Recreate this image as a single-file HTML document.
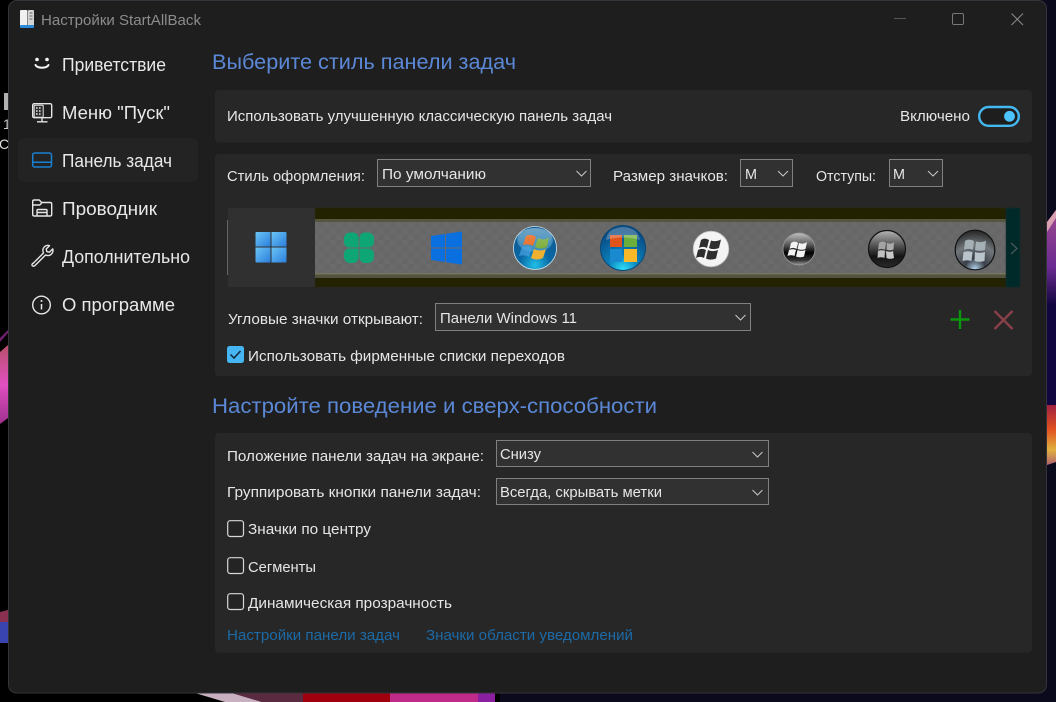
<!DOCTYPE html>
<html><head><meta charset="utf-8"><style>
html,body{margin:0;padding:0;background:#000;width:1056px;height:702px;overflow:hidden}
svg{display:block;filter:blur(.35px)}
text{font-family:"Liberation Sans",sans-serif;white-space:pre}
.b{font-size:15px;fill:#e6e6e6}
.n{font-size:18px;fill:#e8e8e8}
.h{font-size:21.5px;fill:#5b88d6}
.l{font-size:15px;fill:#1c6aa6}
</style></head><body>
<svg width="1056" height="702" viewBox="0 0 1056 702" xmlns="http://www.w3.org/2000/svg">
<defs>
<pattern id="ck" width="12" height="12" patternUnits="userSpaceOnUse"><rect width="12" height="12" fill="#6a6a6a"/><rect width="6" height="6" fill="#676767"/><rect x="6" y="6" width="6" height="6" fill="#676767"/></pattern>
<linearGradient id="w11" x1="0" y1="0" x2="1" y2="1"><stop offset="0" stop-color="#6cc4f5"/><stop offset="1" stop-color="#2a7fdc"/></linearGradient>
<radialGradient id="blue" cx=".5" cy=".9" r=".8"><stop offset="0" stop-color="#1fc0e8"/><stop offset=".45" stop-color="#0a68a4"/><stop offset="1" stop-color="#0f5a94"/></radialGradient>
<radialGradient id="blue2" cx=".5" cy=".98" r=".85"><stop offset="0" stop-color="#2fe0fa"/><stop offset=".4" stop-color="#0a80ba"/><stop offset="1" stop-color="#0a4c84"/></radialGradient>
<linearGradient id="sh" x1="0" y1="0" x2="0" y2="1"><stop offset="0" stop-color="#fff" stop-opacity=".55"/><stop offset="1" stop-color="#fff" stop-opacity=".05"/></linearGradient>
<linearGradient id="dk1" x1="0" y1="0" x2="0" y2="1"><stop offset="0" stop-color="#c0c0c0"/><stop offset=".38" stop-color="#555"/><stop offset=".62" stop-color="#000"/><stop offset=".85" stop-color="#333"/><stop offset="1" stop-color="#999"/></linearGradient>
<linearGradient id="dk2" x1="0" y1="0" x2="0" y2="1"><stop offset="0" stop-color="#b4b4b4"/><stop offset=".45" stop-color="#4a4a4a"/><stop offset=".7" stop-color="#141414"/><stop offset="1" stop-color="#2a2a2a"/></linearGradient>
<radialGradient id="dk3" cx=".5" cy=".98" r=".95"><stop offset="0" stop-color="#b4d4ec"/><stop offset=".28" stop-color="#3a4048"/><stop offset=".65" stop-color="#70767a"/><stop offset="1" stop-color="#2a2a2a"/></radialGradient>
<linearGradient id="lg" x1="0" y1="0" x2="0" y2="1"><stop offset="0" stop-color="#b8506a"/><stop offset=".5" stop-color="#e050c0"/><stop offset="1" stop-color="#a03090"/></linearGradient>
<linearGradient id="rg" x1="0" y1="0" x2="0" y2="1"><stop offset="0" stop-color="#a02040"/><stop offset=".4" stop-color="#e05020"/><stop offset=".75" stop-color="#e0b040"/><stop offset="1" stop-color="#b06070"/></linearGradient>
<linearGradient id="rp" x1="0" y1="0" x2="0" y2="1"><stop offset="0" stop-color="#a04a90"/><stop offset=".6" stop-color="#6a2a90"/><stop offset="1" stop-color="#120640"/></linearGradient>
<filter id="bl"><feGaussianBlur stdDeviation=".7"/></filter>
</defs>

<!-- desktop -->
<rect width="1056" height="702" fill="#000"/>
<rect x="500" y="0" width="556" height="702" fill="#0b0a1c"/>
<polygon points="1047,222 1056,210 1056,305 1047,305" fill="url(#rp)"/>
<polygon points="1047,222 1056,210 1056,218 1047,232" fill="#d8a0b0"/>
<rect x="1047" y="305" width="9" height="100" fill="#120640"/>
<polygon points="1047,405 1056,405 1056,462 1047,465" fill="url(#rg)"/>
<polygon points="0,352 8,345 8,418 0,424" fill="url(#lg)"/>
<polygon points="0,338 8,330 8,333 0,342" fill="#702070"/>
<polygon points="0,622 8,622 8,643 0,643" fill="#3a44b0"/>
<polygon points="0,612 8,610 8,622 0,622" fill="#8a3050"/>
<rect x="4" y="93" width="4" height="17" fill="#b0b0b0"/>
<text x="3" y="129" style="font-size:14px;fill:#ccc">1</text>
<text x="-1" y="149" style="font-size:14px;fill:#ddd">C</text>
<polygon points="195,693 232,693 262,702 225,702" fill="#c8b0c0"/>
<polygon points="232,693 303,693 303,702 262,702" fill="#5a2a40"/>
<rect x="303" y="693" width="87" height="9" fill="#a0000e"/>
<rect x="390" y="693" width="88" height="9" fill="#c02a88"/>
<rect x="478" y="693" width="17" height="9" fill="#8a20a0"/>

<!-- window -->
<rect x="8.5" y="0.5" width="1038" height="692.5" rx="8" fill="#1e1e1e" stroke="#34343a"/>

<!-- title -->
<rect x="20" y="10" width="7.5" height="16" rx="1" fill="#f0f0f0"/>
<rect x="28" y="10" width="6" height="16" rx="1" fill="#d4d4d4"/>
<path d="M29.5 13h3M29.5 16h3M29.5 19h3" stroke="#666" stroke-width="1"/>
<rect x="20" y="25" width="14" height="3" rx="1" fill="#2a8ad8"/>
<text x="41" y="25" textLength="160" lengthAdjust="spacingAndGlyphs" style="font-size:14.5px;fill:#8c8c8c">Настройки StartAllBack</text>
<path d="M894 18.5h12" stroke="#555" stroke-width="1"/>
<rect x="952.5" y="13.5" width="11" height="11" rx="1.5" fill="none" stroke="#777"/>
<path d="M1011.5 13.5l11.5 11.5M1023 13.5l-11.5 11.5" stroke="#888" stroke-width="1.1" fill="none"/>

<!-- nav -->
<rect x="18" y="138" width="180" height="44" rx="6" fill="#232323"/>
<text class="n" x="62" y="71" textLength="104" lengthAdjust="spacingAndGlyphs">Приветствие</text>
<text class="n" x="62" y="119" textLength="108" lengthAdjust="spacingAndGlyphs">Меню "Пуск"</text>
<text class="n" x="62" y="167" textLength="110" lengthAdjust="spacingAndGlyphs">Панель задач</text>
<text class="n" x="62" y="215" textLength="95" lengthAdjust="spacingAndGlyphs">Проводник</text>
<text class="n" x="62" y="263" textLength="128" lengthAdjust="spacingAndGlyphs">Дополнительно</text>
<text class="n" x="62" y="311" textLength="113" lengthAdjust="spacingAndGlyphs">О программе</text>

<!-- smile -->
<circle cx="37" cy="59.5" r="1.8" fill="#f6f6f6"/><circle cx="47" cy="59.5" r="1.8" fill="#f6f6f6"/>
<path d="M35.5 65c2 3.6 11 3.6 13 0" fill="none" stroke="#f6f6f6" stroke-width="2" stroke-linecap="round"/>
<!-- monitor -->
<g fill="none" stroke="#e4e4e4" stroke-width="1.4">
<rect x="32.7" y="103.7" width="19" height="14" rx="1.5"/>
<rect x="34.2" y="105.2" width="9" height="12" rx=".5" fill="#2c2c2c" stroke-width="1"/>
<path d="M42 118v3.5M37 121.8h10.5"/>
<path d="M36 108h1.6M39 108h1.6M36 111h1.6M39 111h1.6M36 114h1.6M39 114h1.6" stroke-width="1.4"/>
</g>
<!-- taskbar -->
<rect x="32.7" y="153" width="18.8" height="14" rx="2" fill="none" stroke="#1a80d0" stroke-width="1.5"/>
<path d="M33 162.2h18" stroke="#1a80d0" stroke-width="1.5"/>
<!-- folder -->
<g fill="none" stroke="#e6e6e6" stroke-width="1.4">
<path d="M32.7 214v-12.5q0-1.5 1.5-1.5h5l2.5 2.5h8.5q1.5 0 1.5 1.5v10.5q0 1.5-1.5 1.5h-16q-1.5 0-1.5-1.5z"/>
<path d="M32.7 205h7l2-2"/>
<path d="M37 215.5v-5q0-1 1-1h8q1 0 1 1v5M37 212.5h10"/>
</g>
<!-- wrench -->
<path d="M33.5 262.5l10.5-10.5c-1.5-3.500 0-6 2-7 1.300-.7 3-.8 4-.3l-3.300 3.300.6 2.600 2.600.6 3.300-3.300c.5 1.200.3 3-.5 4.200-1.300 2-3.700 3-6.800 2l-10.500 10.500c-1.300 1.200-3 .3-2.900-.6-.2-.5.100-1 .5-1.500z" fill="none" stroke="#e6e6e6" stroke-width="1.4" stroke-linejoin="round" transform="translate(-.5 1)"/>
<!-- info -->
<circle cx="41.500" cy="305" r="8.800" fill="none" stroke="#e6e6e6" stroke-width="1.4"/>
<circle cx="41.500" cy="301" r="1" fill="#e6e6e6"/>
<path d="M41.500 304v5.500" stroke="#e6e6e6" stroke-width="1.500"/>

<!-- headings -->
<text class="h" x="212" y="69" textLength="304" lengthAdjust="spacingAndGlyphs">Выберите стиль панели задач</text>
<text class="h" x="212" y="413" textLength="445" lengthAdjust="spacingAndGlyphs">Настройте поведение и сверх-способности</text>

<!-- cards -->
<rect x="215" y="90" width="817" height="52.500" rx="4" fill="#272727"/>
<rect x="215" y="154" width="817" height="222" rx="4" fill="#272727"/>
<rect x="215" y="433" width="817" height="219.500" rx="4" fill="#272727"/>

<!-- card 1 -->
<text class="b" x="227" y="121" textLength="385" lengthAdjust="spacingAndGlyphs">Использовать улучшенную классическую панель задач</text>
<text class="b" x="900" y="121" textLength="70" lengthAdjust="spacingAndGlyphs">Включено</text>
<rect x="979.200" y="107" width="39.600" height="18.800" rx="9.400" fill="#1e1e1e" stroke="#44b8f0" stroke-width="2.400"/>
<circle cx="1009.500" cy="116.300" r="5.400" fill="#4cc2ff"/>

<!-- card 2 row 1 -->
<text class="b" x="227" y="181" textLength="138" lengthAdjust="spacingAndGlyphs">Стиль оформления:</text>
<rect x="377.500" y="159.500" width="213" height="27" fill="#313131" stroke="#808080"/>
<text class="b" x="382" y="179" textLength="104" lengthAdjust="spacingAndGlyphs">По умолчанию</text>
<path d="M576.500 171l5 5 5-5" fill="none" stroke="#c8c8c8" stroke-width="1"/>
<text class="b" x="613" y="181" textLength="115" lengthAdjust="spacingAndGlyphs">Размер значков:</text>
<rect x="740.500" y="159.500" width="52" height="27" fill="#313131" stroke="#808080"/>
<text class="b" x="745" y="179" textLength="12" lengthAdjust="spacingAndGlyphs">M</text>
<path d="M778 171l5 5 5-5" fill="none" stroke="#c8c8c8" stroke-width="1"/>
<text class="b" x="816" y="181" textLength="60" lengthAdjust="spacingAndGlyphs">Отступы:</text>
<rect x="889.500" y="159.500" width="53" height="27" fill="#313131" stroke="#808080"/>
<text class="b" x="893" y="179" textLength="12" lengthAdjust="spacingAndGlyphs">M</text>
<path d="M928 171l5 5 5-5" fill="none" stroke="#c8c8c8" stroke-width="1"/>

<!-- strip -->
<rect x="315" y="208" width="691" height="79" fill="#232300" filter="url(#bl)"/>
<rect x="315" y="219" width="691" height="59" fill="url(#ck)"/>
<rect x="315" y="219" width="691" height="3" fill="#55563e"/>
<rect x="315" y="273" width="691" height="1.500" fill="#76765e"/>
<rect x="315" y="274.500" width="691" height="3.500" fill="#52533c"/>
<rect x="1006" y="208" width="14" height="79" fill="#052c2a" filter="url(#bl)"/>
<path d="M1011 243l6 5.500-6 5.500" fill="none" stroke="#4a5856" stroke-width="1.200"/>
<rect x="228" y="208" width="87" height="79" rx="2" fill="#303030"/>
<rect x="227" y="220" width="1" height="55" fill="#666"/>

<!-- win11 -->
<g>
<path d="M256.500 232h14v14.500h-15v-13.500q0-1 1-1z" fill="url(#w11)"/>
<path d="M271.500 232h14q1 0 1 1v13.500h-15z" fill="url(#w11)"/>
<path d="M255.500 247.500h15v15h-14q-1 0-1-1z" fill="url(#w11)"/>
<path d="M271.500 247.500h15v14q0 1-1 1h-14z" fill="url(#w11)"/>
</g>
<!-- clover -->
<g fill="#0fa676">
<path d="M358.500 247.500h-9a5.500 5.500 0 0 1-5.500-5.500v-3.500a6 6 0 0 1 6-6h3a5.500 5.500 0 0 1 5.500 5.500z"/>
<path d="M359.500 247.500h9a5.500 5.500 0 0 0 5.500-5.500v-3.500a6 6 0 0 0-6-6h-3a5.500 5.500 0 0 0-5.500 5.500z"/>
<path d="M358.500 248.500h-9a5.500 5.500 0 0 0-5.500 5.500v3a6 6 0 0 0 6 6h3a5.500 5.500 0 0 0 5.500-5.500z"/>
<path d="M359.500 248.500h9a5.500 5.500 0 0 1 5.500 5.500v3a6 6 0 0 1-6 6h-3a5.500 5.500 0 0 1-5.500-5.500z"/>
</g>
<!-- win10 -->
<g fill="#0a70e0">
<path d="M431 236l14-2v13.500h-14z"/><path d="M446 233.800l16-2.300v16h-16z"/>
<path d="M431 248.500h14v13.500l-14-2z"/><path d="M446 248.500h16v16l-16-2.300z"/>
</g>
<!-- orb 1 -->
<circle cx="535" cy="248" r="21.500" fill="url(#blue)" stroke="#cfe4ee" stroke-width=".8"/>
<ellipse cx="535" cy="240" rx="18" ry="12" fill="#7cc0e0" opacity=".45"/>
<path d="M526 236c4-2 7-1 10 1l-3 9c-3-2-7-2-10-1z" fill="#e86a20"/>
<path d="M538 238c4 2 8 2 11-1l-2 10c-4 2-8 2-12 0z" fill="#7cae3c"/>
<path d="M522 247c4-1 7-1 10 1l-3 9c-3-2-7-2-10-1z" fill="#4aa4e4" opacity=".7"/>
<path d="M534 249c4 2 8 2 12 0l-3 9c-4 2-8 2-12 0z" fill="#f0b030"/>
<ellipse cx="535" cy="238" rx="17" ry="10" fill="url(#sh)" opacity=".45"/>
<!-- orb 2 -->
<circle cx="623" cy="248" r="22.500" fill="url(#blue2)" stroke="#0a4878" stroke-width="1"/>
<rect x="610" y="235" width="12" height="12" fill="#e0541c"/>
<rect x="624" y="235" width="13" height="12" fill="#6cae3c"/>
<rect x="610" y="249" width="12" height="13" fill="#1a8ad0"/>
<rect x="624" y="249" width="13" height="13" fill="#f8b828"/>
<path d="M606 240q1-12 17-13 15 1 17 13-17-5-34 0z" fill="#fff" opacity=".25"/>
<!-- orb white -->
<circle cx="711" cy="249" r="17.800" fill="#f4f4f4" stroke="#bbb" stroke-width=".8"/>
<path d="M701 240c3-2 5-1.500 8 0l-2 8c-3-1.500-5-1.500-8 0z" fill="#2e2e2e"/>
<path d="M711 240.500c3 1 6 1 10-1l-2 8.500c-4 1.500-7 1.500-10 0z" fill="#2e2e2e"/>
<path d="M698 250c3-1.500 5-1.500 8 0l-2 8c-3-1.500-5-1.500-8 0z" fill="#2e2e2e"/>
<path d="M708 250c3 1.500 6 1.500 10 0l-2 8.500c-4 1.500-7 1.500-10 0z" fill="#2e2e2e"/>
<!-- orb dark 1 -->
<circle cx="799" cy="249" r="16" fill="url(#dk1)" stroke="#9a9a9a" stroke-width=".8"/>
<path d="M791 243c3-2 5-1.500 7 0l-1.500 6c-2-1.500-5-1.500-7 0z" fill="#f2f2f2"/>
<path d="M799 243c3 1 5 1 8-1l-1.500 7c-3 1-5 1-8 0z" fill="#f2f2f2"/>
<path d="M789 250c2-1 5-1 7 0l-1.500 6c-2-1-5-1-7 0z" fill="#f2f2f2"/>
<path d="M797.500 250c3 1 5 1 8 0l-1.500 6.500c-3 1-5 1-8 0z" fill="#f2f2f2"/>
<!-- orb dark 2 -->
<circle cx="887" cy="249" r="18.500" fill="url(#dk2)" stroke="#111" stroke-width="1.200"/>
<path d="M879 243c3-2 5-1.500 7 0l-1 7c-2-1.500-5-1.500-7 0z" fill="#a4a4a4"/>
<path d="M887 243c3 1 5 1 7-1l-.5 7.500c-3 1-5 1-7 0z" fill="#aaa"/>
<path d="M878 251c2-1 5-1 7 0l-.5 7c-2-1-5-1-7 0z" fill="#c0c0c0"/>
<path d="M886 251c3 1 5 1 7 0l1 7c-3 1-5 1-7.500 0z" fill="#c8c8c8"/>
<!-- orb dark 3 -->
<circle cx="975" cy="250" r="19.800" fill="url(#dk3)" stroke="#111" stroke-width="1.200"/>
<path d="M965 241c3-2 6-1.500 9 0l-1 9c-3-1.500-6-1.500-9 0z" fill="#a4b0b6"/>
<path d="M976 241.500c4 1 7 1 10-1l-1 9.500c-4 1-7 1-10 0z" fill="#a4b0b6"/>
<path d="M963.500 252c3-1 6-1 9 0l-1 9c-3-1-6-1-9 0z" fill="#b8c4ca"/>
<path d="M975 252c3 1 7 1 10 0l-.5 9c-4 1-7 1-10 0z" fill="#b8c4ca"/>

<!-- corner row -->
<text class="b" x="228" y="324" textLength="195" lengthAdjust="spacingAndGlyphs">Угловые значки открывают:</text>
<rect x="435.500" y="303.500" width="315" height="27" fill="#313131" stroke="#808080"/>
<text class="b" x="440" y="323" textLength="137" lengthAdjust="spacingAndGlyphs">Панели Windows 11</text>
<path d="M735.500 315l5 5 5-5" fill="none" stroke="#c8c8c8" stroke-width="1"/>
<path d="M960 310v19M950.500 319.500h19" stroke="#0a960a" stroke-width="2.400"/>
<path d="M994.500 311l18 18M1012.500 311l-18 18" stroke="#8a4048" stroke-width="2.400"/>
<rect x="227" y="346" width="17" height="17" rx="2.500" fill="#45b6f2"/>
<path d="M230.500 354.500l3.500 3.500 6.500-7" fill="none" stroke="#14283a" stroke-width="1.500"/>
<text class="b" x="248" y="361" textLength="317" lengthAdjust="spacingAndGlyphs">Использовать фирменные списки переходов</text>

<!-- card 3 -->
<text class="b" x="227" y="461" textLength="257" lengthAdjust="spacingAndGlyphs">Положение панели задач на экране:</text>
<rect x="496.500" y="440.500" width="272" height="26" fill="#313131" stroke="#808080"/>
<text class="b" x="500" y="459" textLength="41" lengthAdjust="spacingAndGlyphs">Снизу</text>
<path d="M752.500 452l5 5 5-5" fill="none" stroke="#c8c8c8" stroke-width="1"/>
<text class="b" x="227" y="497" textLength="254" lengthAdjust="spacingAndGlyphs">Группировать кнопки панели задач:</text>
<rect x="496.500" y="478.500" width="272" height="26" fill="#313131" stroke="#808080"/>
<text class="b" x="500" y="497" textLength="162" lengthAdjust="spacingAndGlyphs">Всегда, скрывать метки</text>
<path d="M752.500 490l5 5 5-5" fill="none" stroke="#c8c8c8" stroke-width="1"/>

<rect x="227.700" y="520.700" width="15.800" height="15.800" rx="2.500" fill="#242424" stroke="#d8d8d8" stroke-width="1.200"/>
<text class="b" x="248" y="534" textLength="123" lengthAdjust="spacingAndGlyphs">Значки по центру</text>
<rect x="227.700" y="557.700" width="15.800" height="15.800" rx="2.500" fill="#242424" stroke="#d8d8d8" stroke-width="1.200"/>
<text class="b" x="248" y="572" textLength="68" lengthAdjust="spacingAndGlyphs">Сегменты</text>
<rect x="227.700" y="593.700" width="15.800" height="15.800" rx="2.500" fill="#242424" stroke="#d8d8d8" stroke-width="1.200"/>
<text class="b" x="248" y="608" textLength="204" lengthAdjust="spacingAndGlyphs">Динамическая прозрачность</text>
<text class="l" x="227" y="640" textLength="173" lengthAdjust="spacingAndGlyphs">Настройки панели задач</text>
<text class="l" x="426" y="640" textLength="207" lengthAdjust="spacingAndGlyphs">Значки области уведомлений</text>
</svg>
</body></html>
